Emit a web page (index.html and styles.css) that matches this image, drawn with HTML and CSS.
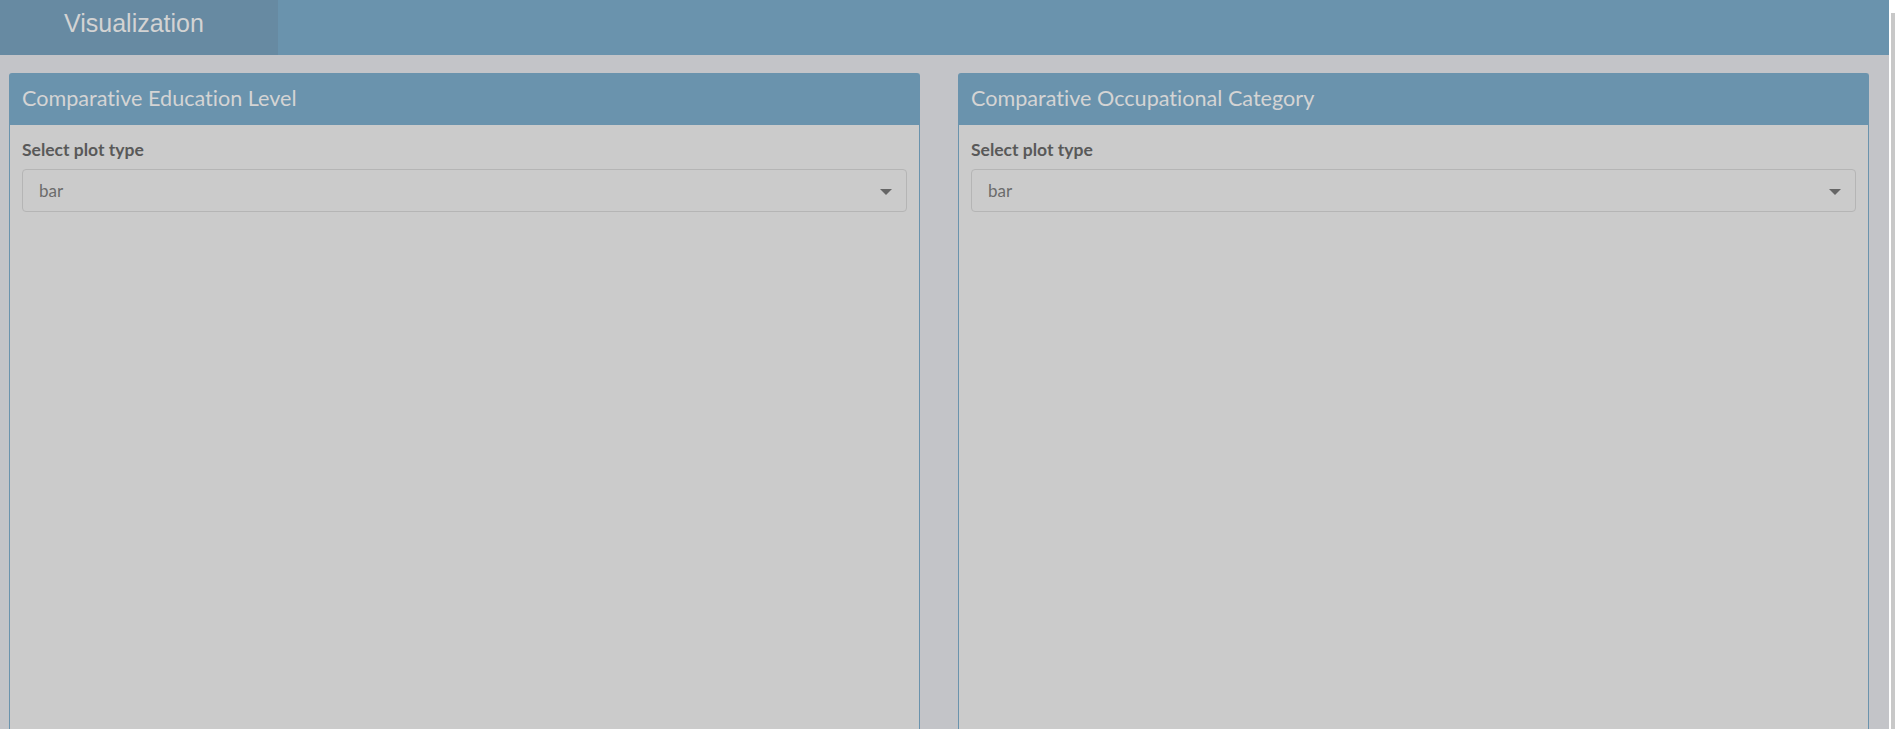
FILE: index.html
```html
<!DOCTYPE html>
<html>
    <head>
        <title>Visualization</title>
        <meta charset="UTF-8">
        <meta name="viewport" content="width=device-width, initial-scale=1.0">
        <link rel="stylesheet" href="styles.css">
    </head>
    <body>
        <div class="pagina">
            <div class="barraTopo">
                <div class="abaAtiva">Visualization</div>
            </div>

            <div class="conteudo">
                <div class="caixa">
                    <div class="caixaTitulo">Comparative Education Level</div>
                    <div class="caixaCorpo">
                        <label class="rotulo">Select plot type</label>
                        <div class="seletor">
                            <span>bar</span>
                            <span class="seta"></span>
                        </div>
                    </div>
                </div>

                <div class="caixa">
                    <div class="caixaTitulo">Comparative Occupational Category</div>
                    <div class="caixaCorpo">
                        <label class="rotulo">Select plot type</label>
                        <div class="seletor">
                            <span>bar</span>
                            <span class="seta"></span>
                        </div>
                    </div>
                </div>
            </div>
        </div>
        <div class="rolagem"></div>
    </body>
</html>
```

FILE: styles.css
```css
html, body {
    margin: 0;
    height: 100%;
    overflow: hidden;
    background: #ffffff;
}

.pagina {
    width: 1889px;
    height: 100%;
    background: #c3c4c8;
    font-family: "Lato", "Liberation Sans", sans-serif;
    font-variant-ligatures: none;
}

.barraTopo {
    height: 55px;
    background: #6a93ad;
    display: flex;
}

.abaAtiva {
    width: 278px;
    background: #678aa2;
    color: #d3d3d3;
    font-family: "Liberation Sans", Arial, sans-serif;
    font-size: 25px;
    line-height: 47px;
    padding-left: 64px;
    box-sizing: border-box;
}

.conteudo {
    display: flex;
    gap: 38px;
    padding: 18px 20px 0 9px;
    height: calc(100% - 55px);
    box-sizing: border-box;
}

.caixa {
    width: 911px;
    display: flex;
    flex-direction: column;
    border: 1px solid #6a93ad;
    border-bottom: none;
    border-radius: 3px 3px 0 0;
    box-sizing: border-box;
}

.caixaTitulo {
    height: 51px;
    background: #6a93ad;
    color: #d4d4d4;
    font-size: 21.6px;
    line-height: 49px;
    padding-left: 12px;
}

.caixaCorpo {
    flex: 1;
    background: #cbcbcb;
    padding: 14px 12px 0 12px;
}

.rotulo {
    display: block;
    color: #595959;
    font-weight: bold;
    font-size: 17.5px;
    line-height: 22px;
    margin-bottom: 8px;
}

.seletor {
    height: 43px;
    border: 1px solid #b5b5b5;
    border-radius: 4px;
    box-sizing: border-box;
    display: flex;
    align-items: center;
    justify-content: space-between;
    padding: 0 14px 0 16px;
    color: #6b6b6b;
    font-size: 17px;
}

.seta {
    width: 0;
    height: 0;
    border-left: 6px solid transparent;
    border-right: 6px solid transparent;
    border-top: 6px solid #666666;
    margin-top: 2px;
}

.rolagem {
    position: fixed;
    top: 13px;
    right: 0;
    width: 4px;
    bottom: 0;
    background: #c8c8c8;
}
```
